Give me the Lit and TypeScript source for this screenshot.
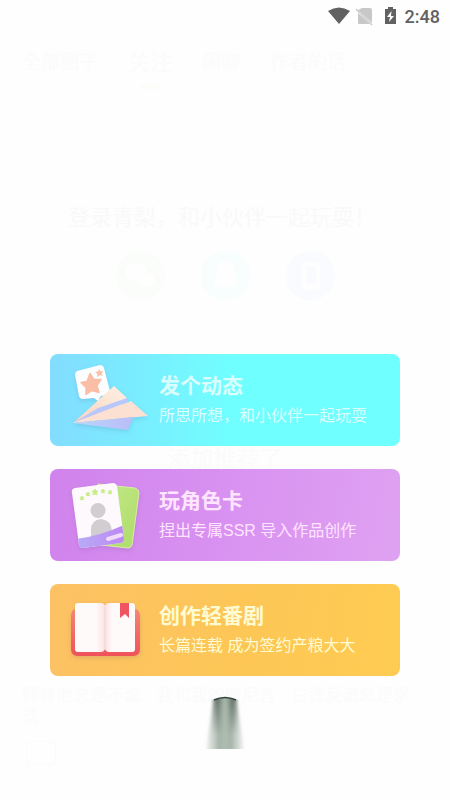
import { LitElement, html, css, svg } from "lit";
import { customElement } from "lit/decorators.js";

const plane = svg`
  <defs>
    <linearGradient id="wing" x1="0" y1="1" x2="1" y2="0"><stop offset="0" stop-color="#fbd3bd"/><stop offset="1" stop-color="#fdf0e4"/></linearGradient>
    <linearGradient id="fold" x1="0" y1="0" x2="1" y2="0"><stop offset="0" stop-color="#bcd6fb"/><stop offset="1" stop-color="#b9bdf8"/></linearGradient>
  </defs>
  <path d="M9 11 L32 5 Q35 5 36 8 L42 31 Q42 34 39 35 L33 36 L30 41 L26 38 L15 39 Q12 39 11 36 L7 15 Q7 12 9 11Z" fill="#fbfdff"/>
  <path d="M22 13.500 L26 19.500 L33 19.500 L29 25.500 L31 32.500 L24 30.500 L18 34.500 L18 27.500 L13 22.500 L19 21.500Z" fill="#f9bea5" stroke="#f9bea5" stroke-width="1.500" stroke-linejoin="round"/>
  <path d="M31 9 L32.500 11.500 L35.500 11 L33.500 13.500 L35 16 L32 15 L29 17 L29.500 14 L27 12 L30 11.500Z" fill="#f9bea5"/>
  <path d="M5 63 L46 26 L59 38 L50 49Z" fill="url(#wing)"/>
  <path d="M5 63 L30 48 L59 38 L60 42Z" fill="#b9c7fb"/>
  <path d="M5 63 L63 41 L80 56Z" fill="#fce0d2"/>
  <path d="M5 63 L65 57 L60 70Z" fill="url(#fold)"/>`;

const star = (x: number, y: number, r: number) => svg`<path fill="#c6ed86" stroke="#c6ed86" stroke-linejoin="round" d="M${x} ${y - r} l${r * 0.3} ${r * 0.7} l${r * 0.7} 0 l${-r * 0.5} ${r * 0.6} l${r * 0.2} ${r * 0.7} l${-r * 0.7} ${-r * 0.4} l${-r * 0.7} ${r * 0.4} l${r * 0.2} ${-r * 0.7} l${-r * 0.5} ${-r * 0.6} l${r * 0.7} 0Z"/>`;

const roleCards = svg`
  <defs>
    <linearGradient id="leaf" x1="0" y1="0" x2="1" y2="1"><stop offset="0" stop-color="#c5e98b"/><stop offset="1" stop-color="#aedc69"/></linearGradient>
    <linearGradient id="band" x1="0" y1="0" x2="1" y2="0"><stop offset="0" stop-color="#b7adf7"/><stop offset="1" stop-color="#bd86f2"/></linearGradient>
    <clipPath id="front"><path d="M7 13 L45 8 Q48 8 49 11 L56 64 Q56 67 53 68 L15 73 Q12 73 11 70 L4 18 Q3 14 7 13Z"/></clipPath>
  </defs>
  <path d="M30 9 L67 13 Q71 14 71 18 L64 70 Q63 73 60 73 L24 69Z" fill="url(#leaf)" stroke="#d7eda8"/>
  <g clip-path="url(#front)">
    <rect width="80" height="80" fill="#fdf9fd"/>
    <circle cx="30" cy="35.500" r="7.500" fill="#d1cdd1"/>
    <path d="M23 66 V55 Q23 45 33 44 Q43 45 44 56 V62Z" fill="#d1cdd1"/>
    <path d="M8 64 Q32 61 58 49 V78 H8Z" fill="url(#band)"/>
    <path d="M40 64 L53 60" stroke="#f0dafd" stroke-width="4" stroke-linecap="round"/>
    ${star(14, 23, 2)}${star(20, 19, 2)}${star(27, 17, 3)}${star(35, 16, 2)}${star(42, 17, 2)}
  </g>`;

const book = svg`
  <defs>
    <linearGradient id="cover" x1="0" y1="0" x2="0" y2="1"><stop offset="0" stop-color="#f28775"/><stop offset="1" stop-color="#ee525b"/></linearGradient>
    <linearGradient id="left" x1="0" x2="1" y1="0" y2="0"><stop offset="0.700" stop-color="#fffafa"/><stop offset="1" stop-color="#fbe3e3"/></linearGradient>
    <linearGradient id="right" x1="0" x2="1" y1="0" y2="0"><stop offset="0" stop-color="#fbe3e3"/><stop offset="0.250" stop-color="#fffafa"/></linearGradient>
  </defs>
  <path d="M8 19 Q3 20 3 26 V59 Q3 66 10 66 H65 Q72 66 72 59 V26 Q72 20 67 19Z" fill="url(#cover)"/>
  <path d="M10 13 H33 Q36 13 37 16 V59 Q36 62 33 62 H10 Q7 62 7 59 V16 Q7 13 10 13Z" fill="url(#left)"/>
  <path d="M41 13 H64 Q67 13 67 16 V59 Q67 62 64 62 H41 Q38 62 37 59 V16 Q38 13 41 13Z" fill="url(#right)"/>
  <path d="M37 17 V60" stroke="#f8cfcf"/>
  <path d="M52 13 H61 V28 L57 24 L52 28Z" fill="#ef5560"/>`;

const actions = [
  { cls: "post", title: "发个动态", note: "所思所想，和小伙伴一起玩耍", art: plane },
  { cls: "role", title: "玩角色卡", note: "捏出专属SSR 导入作品创作", art: roleCards },
  { cls: "story", title: "创作轻番剧", note: "长篇连载 成为签约产粮大大", art: book },
];

@customElement("app-root")
export class AppRoot extends LitElement {
  static styles = css`
    :host { display: grid; min-height: 100vh; background: #fefefe; overflow: hidden;
      font-family: "Liberation Sans", "Noto Sans CJK SC", sans-serif; }
    * { box-sizing: border-box; }
    .page, .sheet { grid-area: 1 / 1; min-width: 0; display: flex; flex-direction: column; }
    .page { color: #fbfbfb; padding-top: 44px; }
    .tabs { display: flex; align-items: center; padding-left: 22px; height: 32px; font-size: 19px; white-space: nowrap; gap: 30px; }
    .current { font-size: 22px; }
    .line { width: 20px; height: 4px; border-radius: 2px; background: #fcfcf9; margin: 9px 0 0 140px; }
    .invite { margin: 113px 0 0 68px; font-size: 22px; line-height: 32px; white-space: nowrap; color: #f9f9f9; }
    .logins { display: flex; gap: 36px; margin: 17px 0 0 116px; }
    .login { width: 49px; height: 49px; display: block; }
    .hint { margin: 145px 0 0; font-size: 23px; line-height: 28px; text-align: center; }
    .works { display: grid; grid-template-columns: repeat(3, 1fr); gap: 14px; margin: 212px 38px 0 22px; font-size: 17px; line-height: 22px; }
    .nav { width: 30px; height: 24px; margin: 12px 0 0 26px; border: 1px solid #fbfbfb; border-radius: 4px; }
    .sheet { z-index: 1; }
    .status { display: flex; justify-content: flex-end; align-items: center; height: 32px; padding-right: 10px;
      color: #616161; font-family: Roboto, sans-serif; font-size: 18px; font-weight: 500; }
    .signals { width: 73px; height: 22px; margin-right: 5px; }
    .actions { display: flex; flex-direction: column; gap: 23px; padding: 322px 50px 0; }
    .card { display: flex; align-items: center; width: 100%; height: 92px; padding: 0 0 0 18px; border: 0; border-radius: 8px;
      font-family: inherit; text-align: left; white-space: nowrap; gap: 11px; cursor: pointer; }
    .post { background: linear-gradient(90deg, #83dcff, #70ffff 52%); color: #d9ffff; }
    .role { background: linear-gradient(100deg, #d083ec, #d993f1 55%, #dfa2f1); color: #ffe5ff; }
    .story { background: linear-gradient(100deg, #fcc164, #fdc755 60%, #ffcc52); color: #fffbd2; }
    .art { width: 80px; height: 80px; flex: none; filter: drop-shadow(0 2px 2px rgba(80, 60, 120, 0.15)); }
    .words { display: flex; flex-direction: column; gap: 2px; }
    .title { font-size: 21px; line-height: 30px; font-weight: 700; }
    .note { font-size: 16px; line-height: 26px; }
    .close { align-self: center; width: 50px; height: 56px; margin-top: 20px; padding: 0; border: 0; background: none; }
    .close svg { display: block; width: 50px; height: 56px; }
  `;

  render() {
    return html`
      <div class="page" aria-hidden="true">
        <div class="tabs"><span>全部圈子</span><span class="current">关注</span><span>闲聊</span><span>作者的话</span></div>
        <div class="line"></div>
        <div class="invite">登录青梨，和小伙伴一起玩耍！</div>
        <div class="logins">
          <svg class="login" viewBox="0 0 49 49"><circle cx="24.500" cy="24.500" r="24.500" fill="#fbfdfa"/><ellipse cx="20" cy="21" rx="11" ry="9" fill="#fefefe"/><ellipse cx="30" cy="29" rx="9" ry="7" fill="#fefefe"/></svg>
          <svg class="login" viewBox="0 0 49 49"><circle cx="24.500" cy="24.500" r="24.500" fill="#f8fdfe"/><path d="M15 36 C10 30 16 26 16 20 C16 6 33 6 33 20 C33 26 39 30 34 36Z" fill="#fefefe"/></svg>
          <svg class="login" viewBox="0 0 49 49"><circle cx="24.500" cy="24.500" r="24.500" fill="#fafbfe"/><rect x="16" y="11" width="18" height="28" rx="3" fill="#fefefe"/><rect x="20" y="15" width="10" height="18" fill="#fafbfe"/></svg>
        </div>
        <div class="hint">添加推荐了</div>
        <div class="works"><span>师尊他总是不说话</span><span>我和我的摩尼言</span><span>白莲反派总是求</span></div>
        <div class="nav"></div>
      </div>
      <main class="sheet">
        <div class="status">
          <svg class="signals" viewBox="0 0 73 22" aria-hidden="true">
            <path d="M1 6 Q12 -1 23 6 L12 19Z" fill="#616161"/>
            <path d="M35 3 H43 Q45 3 45 5 V18 L31 5Z M31 8 L43 19 H32 Q31 19 31 18Z" fill="#c8c8c8"/>
            <path d="M29 4 L45 20" stroke="#c8c8c8" stroke-width="1.500"/>
            <path d="M61 2 H66 V4 H69 V19 H58 V4 H61Z" fill="#616161"/>
            <path d="M64.500 6 L60 12 H63 L62 17 L67 11 H64Z" fill="#fff"/>
          </svg>
          <time>2:48</time>
        </div>
        <div class="actions">
          ${actions.map((a) => html`
            <button class="card ${a.cls}">
              <svg class="art" viewBox="0 0 80 80" aria-hidden="true">${a.art}</svg>
              <span class="words"><span class="title">${a.title}</span><span class="note">${a.note}</span></span>
            </button>`)}
        </div>
        <button class="close" aria-label="关闭">
          <svg viewBox="0 0 50 56" aria-hidden="true">
            <defs>
              <linearGradient id="glow" x1="0" x2="1" y1="0" y2="0"><stop offset="0" stop-color="#a5b3a8" stop-opacity="0.100"/><stop offset="0.350" stop-color="#a5b3a8"/><stop offset="0.500" stop-color="#afbeb2"/><stop offset="0.650" stop-color="#a5b3a8"/><stop offset="1" stop-color="#a5b3a8" stop-opacity="0.100"/></linearGradient>
              <linearGradient id="dark" x1="0" x2="1" y1="0" y2="0"><stop offset="0" stop-color="#59665d" stop-opacity="0.200"/><stop offset="0.250" stop-color="#59665d"/><stop offset="0.500" stop-color="#a0afa4" stop-opacity="0.200"/><stop offset="0.750" stop-color="#59665d"/><stop offset="1" stop-color="#59665d" stop-opacity="0.200"/></linearGradient>
              <linearGradient id="fade" x1="0" x2="0" y1="0" y2="1"><stop offset="0" stop-color="#fff"/><stop offset="0.700" stop-color="#fff" stop-opacity="0"/></linearGradient>
              <mask id="top"><rect width="50" height="56" fill="url(#fade)"/></mask>
              <filter id="soft" x="-0.300" width="1.600" y="0" height="1"><feGaussianBlur stdDeviation="1.500 0"/></filter>
            </defs>
            <path d="M13 4 Q25 -1 37 4 L44 53 H6Z" fill="url(#glow)" filter="url(#soft)"/>
            <g mask="url(#top)"><path d="M13 4 Q25 -1 37 4 L39 53 H11Z" fill="url(#dark)" filter="url(#soft)"/></g>
            <path d="M14 4 Q25 -1 36 4" fill="none" stroke="#34413a" stroke-width="1.500"/>
          </svg>
        </button>
      </main>`;
  }
}
